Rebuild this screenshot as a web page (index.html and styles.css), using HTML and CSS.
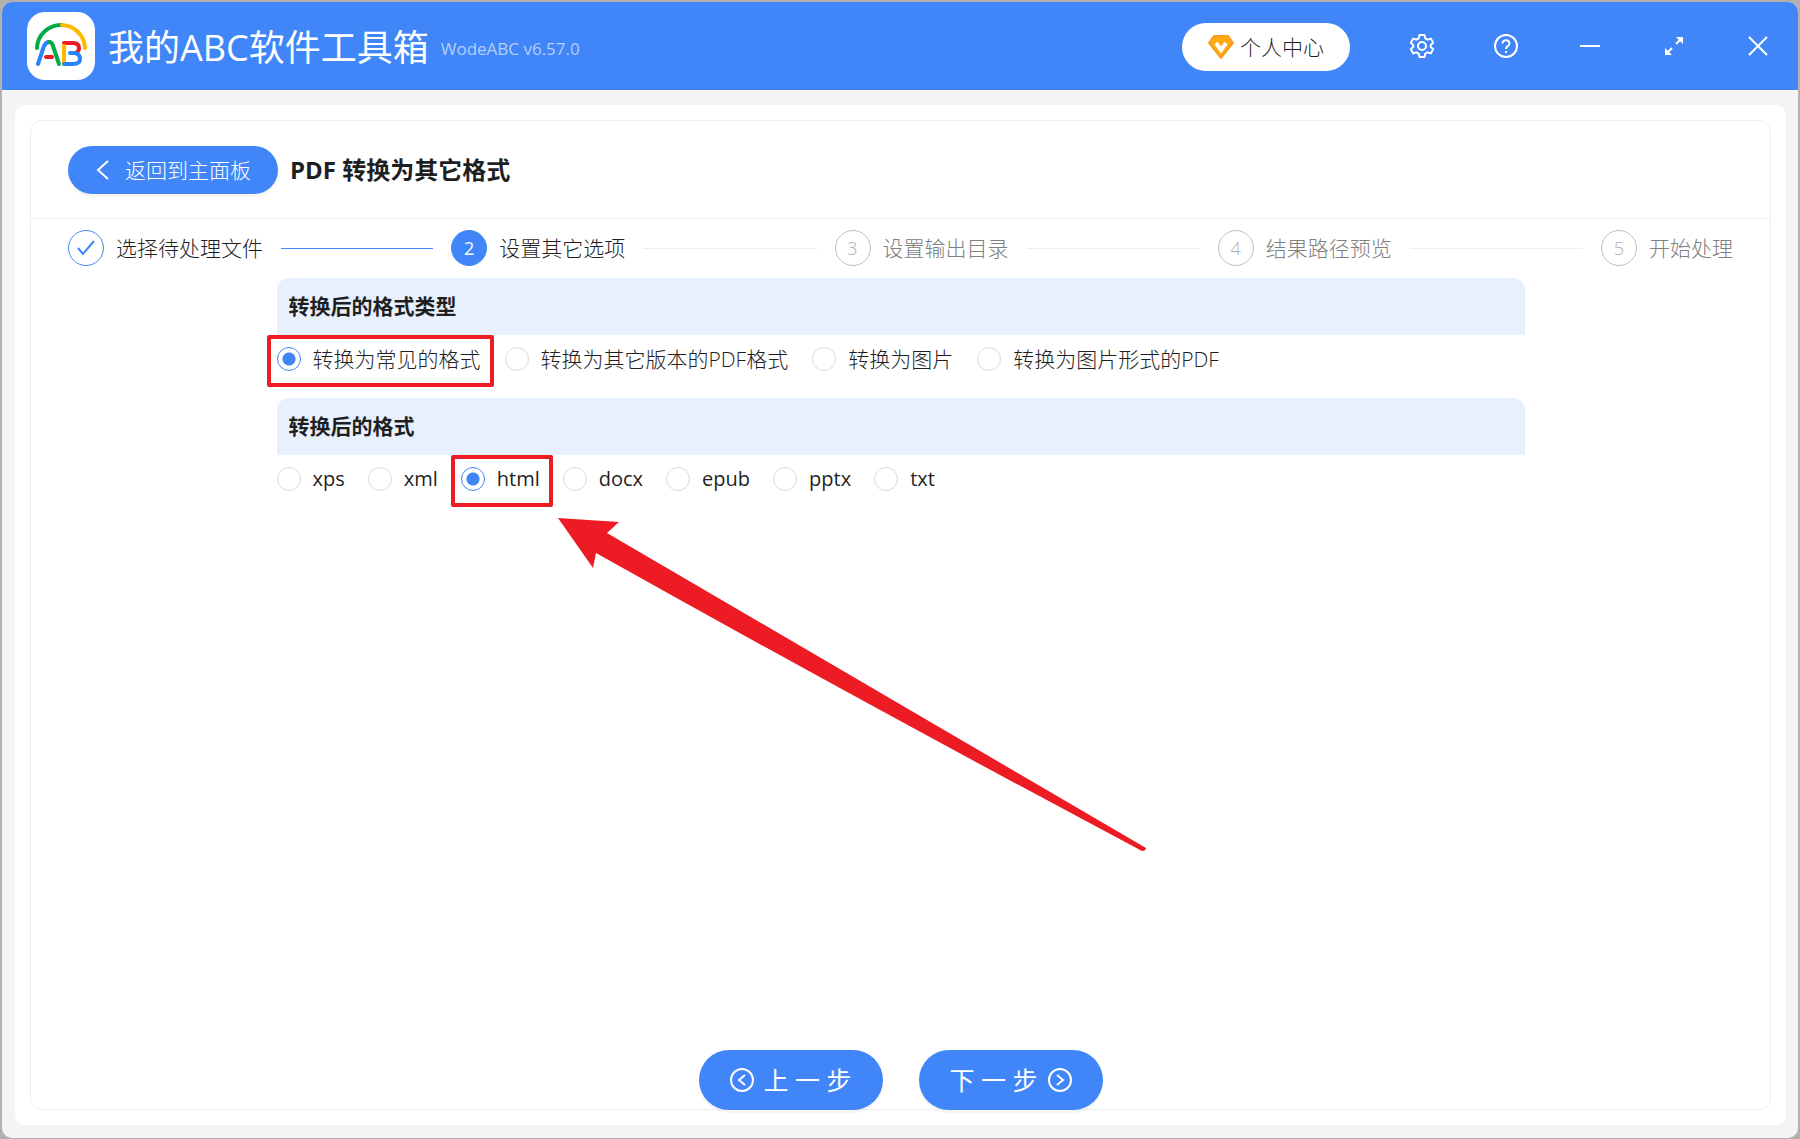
FILE: index.html
```html
<!DOCTYPE html>
<html lang="zh-CN">
<head>
  <meta charset="UTF-8" />
  <meta name="viewport" content="width=device-width, initial-scale=1" />
  <title>我的ABC软件工具箱</title>
  <link rel="stylesheet" href="styles.css">
</head>
<body>
  <div class="window">
    <!-- 标题栏 -->
    <header class="titlebar">
      <svg class="logo" viewBox="0 0 68 68">
        <rect width="68" height="68" rx="18" fill="#fff" />
        <path d="M10 36a24 24 0 0 1 25-23" stroke="#00ac47" />
        <path d="M35 13a24 24 0 0 1 23 23" stroke="#ffba00" />
        <path d="M11 52l6-18q2-4 5-4" stroke="#2684fc" />
        <path d="M22 30q3 0 4 4l6 18" stroke="#00ac47" />
        <path d="M19 45h6" stroke="#ea1c24" />
        <path d="M37 31h9q6 0 6 5 0 3-2 4" stroke="#ea1c24" />
        <path d="M37 34v18" stroke="#ffba00" />
        <path d="M43 41h5q5 1 5 6 0 5-7 5h-9" stroke="#2684fc" />
      </svg>
      <h1>我的ABC软件工具箱</h1>
      <span class="version">WodeABC v6.57.0</span>
      <button type="button" class="user-btn">
        <svg width="26" height="24" viewBox="0 0 26 24">
          <path d="M6 1h14l5 7-12 15L1 8z" fill="#ffab0f" stroke="#f99d1c" stroke-linejoin="round" />
          <path class="gem-v" d="M8 8l5 7 5-7" />
        </svg>
        个人中心
      </button>
      <nav class="tools">
        <button type="button" aria-label="设置">
          <svg viewBox="0 0 24 24"><path d="M9.500 1h5l.8 3.300 2.200 1.300 3.300-1 2.400 4.200-2.500 2.300v1.800l2.500 2.300-2.400 4.200-3.300-1-2.200 1.300-.8 3.300h-5l-.8-3.300-2.200-1.300-3.300 1-2.400-4.200 2.500-2.300v-1.800L.8 8.800l2.400-4.200 3.300 1 2.200-1.300z" /><circle cx="12" cy="12" r="4" /></svg>
        </button>
        <button type="button" aria-label="帮助">
          <svg viewBox="0 0 24 24"><circle cx="12" cy="12" r="11" /><path d="M8.500 9.500a3.500 3.200 0 1 1 5.500 2.500q-2 1-2 3" /><path d="M12 17v2" /></svg>
        </button>
        <button type="button" aria-label="最小化">
          <svg viewBox="0 0 24 24"><path d="M2 12h20" /></svg>
        </button>
        <button type="button" aria-label="最大化">
          <svg viewBox="0 0 24 24"><path d="M14 10l5-5M5 19l5-5" /><path d="M14 3h7v7zM3 14v7h7z" fill="#fff" stroke="none" /></svg>
        </button>
        <button type="button" aria-label="关闭">
          <svg viewBox="0 0 24 24"><path d="M3 3l18 18M21 3L3 21" /></svg>
        </button>
      </nav>
    </header>

    <div class="panel">
      <main class="card">
        <div class="card-head">
          <button type="button" class="back-btn">
            <svg width="14" height="20" viewBox="0 0 14 20"><path d="M13 1L3 10l10 9" /></svg>
            返回到主面板
          </button>
          <h2>PDF 转换为其它格式</h2>
        </div>

        <!-- 步骤条 -->
        <ol class="steps">
          <li class="done">
            <span class="num"><svg width="20" height="20" viewBox="0 0 20 20"><path d="M2 10l5 6L18 3" /></svg></span>
            选择待处理文件
          </li>
          <li class="active"><span class="num">2</span>设置其它选项</li>
          <li><span class="num">3</span>设置输出目录</li>
          <li><span class="num">4</span>结果路径预览</li>
          <li><span class="num">5</span>开始处理</li>
        </ol>

        <form class="options">
          <h3>转换后的格式类型</h3>
          <div class="row">
            <label class="marked"><input type="radio" name="type" checked />转换为常见的格式</label>
            <label><input type="radio" name="type" />转换为其它版本的PDF格式</label>
            <label><input type="radio" name="type" />转换为图片</label>
            <label><input type="radio" name="type" />转换为图片形式的PDF</label>
          </div>
          <h3>转换后的格式</h3>
          <div class="row formats">
            <label><input type="radio" name="format" />xps</label>
            <label><input type="radio" name="format" />xml</label>
            <label class="marked">
              <input type="radio" name="format" checked />html
              <svg class="arrow" width="590" height="336" viewBox="0 0 590 336">
                <path d="M0 0L61 4 49 15 588 330q0 3-4 3Q300 182 38 35L35 50z" fill="#ed1c24" />
              </svg>
            </label>
            <label><input type="radio" name="format" />docx</label>
            <label><input type="radio" name="format" />epub</label>
            <label><input type="radio" name="format" />pptx</label>
            <label><input type="radio" name="format" />txt</label>
          </div>
        </form>

        <div class="actions">
          <button type="button">
            <svg width="24" height="24" viewBox="0 0 24 24"><circle cx="12" cy="12" r="11" /><path d="M15 7l-6 5 6 5" /></svg>
            上 一 步
          </button>
          <button type="button">
            下 一 步
            <svg width="24" height="24" viewBox="0 0 24 24"><circle cx="12" cy="12" r="11" /><path d="M9 7l6 5-6 5" /></svg>
          </button>
        </div>
      </main>
    </div>
  </div>
</body>
</html>
```
FILE: styles.css
```css
* { box-sizing: border-box; }
body {
  margin: 0;
  padding: 2px 2px 1px;
  height: 100vh;
  background: #b4b0ae;
  font-family: "Open Sans", "Noto Sans CJK SC", sans-serif;
  font-size: 21px;
  font-weight: 300;
  line-height: 32px;
  color: #1f1f1f;
}
h1, h2, h3 { margin: 0; }
button {
  display: flex;
  align-items: center;
  justify-content: center;
  border: none;
  padding: 0;
  font: inherit;
  cursor: pointer;
}
svg {
  flex: none;
  fill: none;
  stroke: currentColor;
  stroke-width: 2;
}

.window {
  display: flex;
  flex-direction: column;
  height: 100%;
  background: #f4f4f4;
  border-radius: 10px;
  overflow: hidden;
}

/* 标题栏 */
.titlebar {
  display: flex;
  align-items: center;
  height: 88px;
  padding-left: 25px;
  background: #4086f8;
  color: #fff;
}
.logo {
  width: 68px;
  height: 68px;
  stroke: none;
  stroke-width: 4;
  stroke-linecap: round;
  stroke-linejoin: round;
}
.titlebar h1 {
  margin-left: 13px;
  padding-top: 3px;
  font-size: 36px;
  font-weight: 400;
  line-height: 48px;
}
.version {
  margin-left: 12px;
  padding-top: 6px;
  font-size: 17px;
  font-weight: 400;
  color: #b3cffc;
}
.user-btn {
  width: 168px;
  height: 48px;
  margin: 2px 0 0 auto;
  gap: 6px;
  border-radius: 24px;
  background: #fff;
  color: #1f1f1f;
}
.gem-v {
  stroke: #fff;
  stroke-width: 4;
}
.tools {
  display: flex;
  margin-left: 30px;
  margin-right: -2px;
}
.tools button {
  width: 84px;
  height: 84px;
  background: none;
  color: #fff;
}
.tools svg {
  width: 24px;
  height: 24px;
}

/* 主面板 */
.panel {
  flex: 1;
  display: flex;
  margin: 15px 12px 13px 13px;
  padding: 15px;
  background: #fff;
  border-radius: 10px;
}
.card {
  flex: 1;
  display: flex;
  flex-direction: column;
  border: 1px solid #eee;
  border-radius: 12px;
}
.card-head {
  display: flex;
  align-items: center;
  gap: 12px;
  height: 98px;
  padding: 0 37px;
  border-bottom: 1px solid #eee;
}
.back-btn {
  width: 210px;
  height: 48px;
  gap: 16px;
  border-radius: 24px;
  background: #4086f8;
  color: #fff;
  box-shadow: 0 3px 0 rgba(0, 0, 0, 0.04);
}
.card-head h2 {
  font-size: 24px;
  font-weight: 700;
}

.steps {
  display: flex;
  gap: 18px;
  margin: 0;
  padding: 11px 37px 12px;
  list-style: none;
  color: #808080;
}
.steps li {
  flex: 1;
  display: flex;
  align-items: center;
  gap: 12px;
  height: 36px;
  white-space: nowrap;
}
.steps li:last-child { flex: none; }
.steps li:not(:last-child)::after {
  content: "";
  flex: 1;
  height: 1px;
  margin-left: 6px;
  background: #eee;
}
.steps .num {
  display: flex;
  align-items: center;
  justify-content: center;
  width: 36px;
  height: 36px;
  border: 1px solid #bfbfbf;
  border-radius: 50%;
  font-size: 18px;
  color: #b0b0b0;
}
.steps .done,
.steps .active { color: #1f1f1f; }
.steps .done .num {
  border-color: #4086f8;
  color: #4086f8;
}
.steps .done::after { background: #4086f8 !important; }
.steps .active .num {
  border-color: #4086f8;
  background: #4086f8;
  color: #fff;
  font-weight: 400;
}

/* 选项 */
.options {
  width: 75%;
  max-width: 1248px;
  margin: 0 auto;
}
.options h3 {
  padding: 0 12px;
  border-radius: 12px 12px 0 0;
  background: #e8effd;
  font-size: 21px;
  font-weight: 700;
  line-height: 57px;
}
.row {
  display: flex;
  gap: 24px;
  height: 63px;
  padding-top: 12px;
}
.row label {
  position: relative;
  display: flex;
  align-items: center;
  gap: 12px;
  height: 24px;
  white-space: nowrap;
}
.formats {
  gap: 23px;
  font-size: 20px;
  font-weight: 400;
}
.row input {
  appearance: none;
  width: 24px;
  height: 24px;
  margin: 0;
  border: 1px solid #d9d9d9;
  border-radius: 50%;
}
.row input:checked {
  border-color: #4086f8;
  background: radial-gradient(circle, #4086f8 6px, #fff 7px);
}

/* 红框标注和箭头 */
.marked::after {
  content: "";
  position: absolute;
  inset: -12px -13px -16px -10px;
  border: 4px solid #ed1c24;
  border-radius: 2px;
}
.arrow {
  position: absolute;
  left: 97px;
  top: 51px;
  z-index: 1;
  stroke: none;
  pointer-events: none;
}

.actions {
  display: flex;
  justify-content: center;
  gap: 36px;
  margin-top: auto;
  margin-bottom: -1px;
}
.actions button {
  width: 184px;
  height: 60px;
  gap: 10px;
  border-radius: 30px;
  background: #4086f8;
  color: #fff;
  font-size: 25px;
  font-weight: 400;
  box-shadow: 0 3px 0 rgba(0, 0, 0, 0.04);
}
```
